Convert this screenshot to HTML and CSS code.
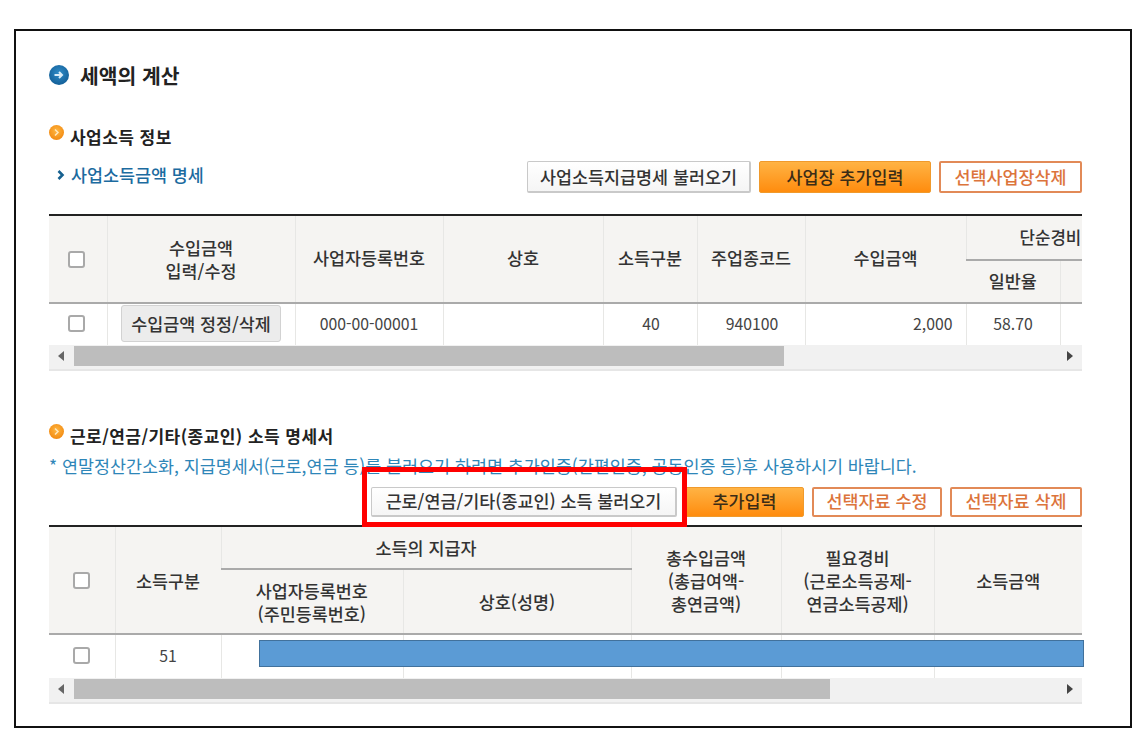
FILE: index.html
```html
<!DOCTYPE html>
<html lang="ko">
<head>
<meta charset="utf-8">
<title>세액의 계산</title>
<link rel="stylesheet" href="styles.css">
</head>
<body>
<main class="frame">
  <h1 class="title">
    <svg class="title-icon" viewBox="0 0 20 20" width="20" height="20"><defs><radialGradient id="b" cx="50%" cy="40%" r="60%"><stop offset="0" stop-color="#2f8cc8"/><stop offset="1" stop-color="#135f98"/></radialGradient></defs><circle cx="10" cy="10" r="10" fill="url(#b)"/><path d="M5.5 10h7M10 7l3 3-3 3" fill="none" stroke="#d9ecf8" stroke-width="2"/></svg>
    세액의 계산
  </h1>

  <section class="first">
    <h2 class="heading">
      <svg class="dot" viewBox="0 0 15 15" width="15" height="15"><defs><radialGradient id="o" cx="50%" cy="40%" r="60%"><stop offset="0" stop-color="#ffb640"/><stop offset="1" stop-color="#f28a12"/></radialGradient></defs><circle cx="7.5" cy="7.5" r="7.5" fill="url(#o)"/><path d="M6 4.5l3 3-3 3" fill="none" stroke="#ffe7bd" stroke-width="1.5"/></svg>
      사업소득 정보
    </h2>
    <div class="toolbar">
      <a class="sublink"><svg viewBox="0 0 8 10" width="8" height="10"><path d="M1.5 1l4 4-4 4" fill="none" stroke="#16608f" stroke-width="2.6"/></svg>사업소득금액 명세</a>
      <div class="actions">
        <button class="btn btn-white w-load">사업소득지급명세 불러오기</button>
        <button class="btn btn-orange w-add">사업장 추가입력</button>
        <button class="btn btn-line w-del">선택사업장삭제</button>
      </div>
    </div>
    <div class="table-wrap">
      <table class="grid grid-one">
        <colgroup><col class="c58"><col class="c188"><col class="c148"><col class="c160"><col class="c94"><col class="c108"><col class="c161"><col class="c94"><col class="c100"></colgroup>
        <thead>
          <tr class="h44">
            <th rowspan="2" class="lead"><input type="checkbox" class="check"></th>
            <th rowspan="2">수입금액<br>입력/수정</th>
            <th rowspan="2" class="lift">사업자등록번호</th>
            <th rowspan="2" class="lift">상호</th>
            <th rowspan="2" class="lift">소득구분</th>
            <th rowspan="2" class="lift">주업종코드</th>
            <th rowspan="2" class="lift">수입금액</th>
            <th colspan="2" class="split">단순경비</th>
          </tr>
          <tr class="h43"><th class="lift-small">일반율</th><th></th></tr>
        </thead>
        <tbody>
          <tr class="row42">
            <td class="lead"><input type="checkbox" class="check"></td>
            <td><button class="btn-cell">수입금액 정정/삭제</button></td>
            <td>000-00-00001</td>
            <td></td>
            <td class="nudge">40</td>
            <td class="nudge">940100</td>
            <td class="num">2,000</td>
            <td>58.70</td>
            <td></td>
          </tr>
        </tbody>
      </table>
    </div>
    <div class="scrollbar">
      <span class="arrow-left"></span>
      <span class="thumb thumb-one"></span>
      <span class="arrow-right"></span>
    </div>
  </section>

  <section class="second">
    <h2 class="heading">
      <svg class="dot" viewBox="0 0 15 15" width="15" height="15"><circle cx="7.5" cy="7.5" r="7.5" fill="url(#o)"/><path d="M6 4.5l3 3-3 3" fill="none" stroke="#ffe7bd" stroke-width="1.5"/></svg>
      근로/연금/기타(종교인) 소득 명세서
    </h2>
    <p class="note">* 연말정산간소화, 지급명세서(근로,연금 등)를 불러오기 하려면 추가인증(간편인증, 공동인증 등)후 사용하시기 바랍니다.</p>
    <div class="actions actions-two">
      <button class="btn btn-white w-income">근로/연금/기타(종교인) 소득 불러오기</button>
      <button class="btn btn-orange w-extra">추가입력</button>
      <button class="btn btn-line w-edit">선택자료 수정</button>
      <button class="btn btn-line w-remove">선택자료 삭제</button>
    </div>
    <div class="table-wrap">
      <table class="grid">
        <colgroup><col class="c66"><col class="c106"><col class="c182"><col class="c228"><col class="c150"><col class="c153"><col class="c148"></colgroup>
        <thead>
          <tr class="h42">
            <th rowspan="2"><input type="checkbox" class="check"></th>
            <th rowspan="2">소득구분</th>
            <th colspan="2" class="split">소득의 지급자</th>
            <th rowspan="2">총수입금액<br>(총급여액-<br>총연금액)</th>
            <th rowspan="2">필요경비<br>(근로소득공제-<br>연금소득공제)</th>
            <th rowspan="2">소득금액</th>
          </tr>
          <tr class="h65"><th>사업자등록번호<br>(주민등록번호)</th><th>상호(성명)</th></tr>
        </thead>
        <tbody>
          <tr class="row44">
            <td><input type="checkbox" class="check"></td>
            <td>51</td>
            <td></td><td></td><td></td><td></td><td></td>
          </tr>
        </tbody>
      </table>
    </div>
    <div class="scrollbar">
      <span class="arrow-left"></span>
      <span class="thumb thumb-two"></span>
      <span class="arrow-right"></span>
    </div>
    <div class="redact"></div>
    <div class="highlight"></div>
  </section>
</main>
</body>
</html>
```
FILE: styles.css
```css
* { box-sizing: border-box; }
html, body { margin: 0; background: #fff; }
body {
  width: 1137px;
  height: 738px;
  padding: 29px 0 0 14px;
  overflow: hidden;
  font-family: "Noto Sans CJK KR", "Noto Sans", sans-serif;
  color: #333;
}
.frame {
  width: 1118px;
  height: 699px;
  border: 2px solid #111;
  padding: 30px 48px 0 33px;
}
.title {
  display: flex;
  align-items: center;
  gap: 11px;
  height: 28px;
  margin: 0;
  font-size: 20.4px;
  font-weight: 700;
  color: #222;
}
.first { margin-top: 36px; }
.second { margin-top: 53px; position: relative; }
.heading {
  display: flex;
  align-items: center;
  gap: 6px;
  height: 22px;
  margin: 0;
  font-size: 17px;
  letter-spacing: 0.45px;
  font-weight: 700;
  color: #222;
}
.dot { position: relative; top: -4px; flex: none; }
.toolbar {
  display: flex;
  justify-content: space-between;
  align-items: flex-start;
  height: 32px;
  margin-top: 14px;
}
.sublink {
  display: flex;
  align-items: center;
  gap: 6px;
  height: 27px;
  padding-left: 8px;
  font-size: 17.4px;
  font-weight: 500;
  color: #1c6b9f;
}
.actions { display: flex; gap: 8px; }
.actions-two { justify-content: flex-end; margin-top: 11px; height: 30px; }
.btn {
  height: 100%;
  min-height: 30px;
  padding: 0 0 2px;
  border-radius: 2px;
  font-family: inherit;
  font-size: 17.4px;
  font-weight: 500;
  line-height: 1;
}
.toolbar .btn { height: 32px; padding-bottom: 0; }
.btn-white {
  background: linear-gradient(#fff, #f5f5f5);
  border: 1px solid #c9c9c9;
  border-width: 1px 2px 2px 1px;
  color: #333;
}
.btn-orange {
  background: linear-gradient(#ffb344, #ff8c0e);
  border: 1px solid #f09a2c;
  color: #3b2c16;
}
.btn-line {
  background: #fff;
  border: 2px solid #e28a57;
  color: #dc743b;
}
.w-load { width: 224px; }
.w-add { width: 172px; }
.w-del { width: 143px; }
.w-income { width: 306px; }
.w-extra { width: 119px; }
.w-edit { width: 130px; }
.w-remove { width: 132px; }
.table-wrap { overflow: hidden; border-top: 2px solid #222; margin-top: 21px; }
.actions-two + .table-wrap { margin-top: 8px; }
.grid {
  table-layout: fixed;
  width: 1033px;
  border-collapse: collapse;
}
.grid-one { width: 1111px; }
.c58 { width: 58px; } .c188 { width: 188px; } .c148 { width: 148px; }
.c160 { width: 160px; } .c94 { width: 94px; } .c108 { width: 108px; }
.c161 { width: 161px; } .c100 { width: 100px; } .c66 { width: 66px; }
.c106 { width: 106px; } .c182 { width: 182px; } .c228 { width: 228px; }
.c150 { width: 150px; } .c153 { width: 153px; }
.grid th, .grid td {
  padding: 0;
  border-left: 1px solid #e7e7e5;
  text-align: center;
  overflow: hidden;
  white-space: nowrap;
}
.grid th:first-child, .grid td:first-child { border-left: 0; }
.grid th {
  background: #f5f4f2;
  font-size: 17.4px;
  font-weight: 500;
  line-height: 23px;
  color: #333;
}
.grid td {
  background: #fff;
  font-size: 15.8px;
  font-weight: 400;
  color: #444;
  padding-bottom: 2px;
}
.grid thead { border-bottom: 2px solid #aaa; }
.h44 { height: 44px; }
.h43 { height: 43px; }
.h42 { height: 42px; }
.h65 { height: 65px; }
.row42 { height: 42px; }
.row44 { height: 44px; }
.grid th.split { border-bottom: 2px solid #aaa; }
.grid th.lift { padding-bottom: 3px; }
.grid th.lift-small { padding-bottom: 2px; }
.grid .lead { padding-right: 3px; }
.grid-one th.split { text-align: left; padding-left: 53px; font-size: 16.8px; }
.grid td.nudge { padding-left: 2px; }
.grid td.num { text-align: right; padding-right: 13px; }
.check {
  appearance: none;
  display: block;
  width: 17px;
  height: 17px;
  margin: 0 auto;
  border: 2px solid #a9a9a9;
  border-radius: 3px;
  background: #fff;
}
.btn-cell {
  display: block;
  width: 160px;
  height: 37px;
  margin: 0 auto;
  padding: 0;
  background: #ececec;
  border: 1px solid #d2d2d2;
  border-radius: 3px;
  font-family: inherit;
  font-size: 17.4px;
  font-weight: 500;
  color: #333;
}
.scrollbar {
  display: flex;
  align-items: center;
  height: 26px;
  padding: 0 9px 2px;
  background: #f1f1f1;
  border-bottom: 2px solid #e6e6e6;
}
.thumb { height: 20px; background: #bdbdbd; }
.thumb-one { width: 710px; margin-left: 10px; }
.thumb-two { width: 756px; margin-left: 10px; }
.arrow-left {
  width: 0; height: 0;
  border: 5px solid transparent;
  border-left: 0;
  border-right: 6px solid #666;
}
.arrow-right {
  width: 0; height: 0;
  margin-left: auto;
  border: 5px solid transparent;
  border-right: 0;
  border-left: 6px solid #444;
}
.highlight {
  position: absolute;
  left: 313px;
  top: 43px;
  width: 325px;
  height: 60px;
  border: 5px solid #ff0000;
}
.redact {
  position: absolute;
  left: 210px;
  top: 216px;
  width: 825px;
  height: 27px;
  background: #5b9bd5;
  border: 1px solid #41719c;
}
.note {
  margin: 10px 0 0;
  height: 20px;
  font-size: 17.4px;
  line-height: 20px;
  color: #2e86b8;
  white-space: nowrap;
}
```
